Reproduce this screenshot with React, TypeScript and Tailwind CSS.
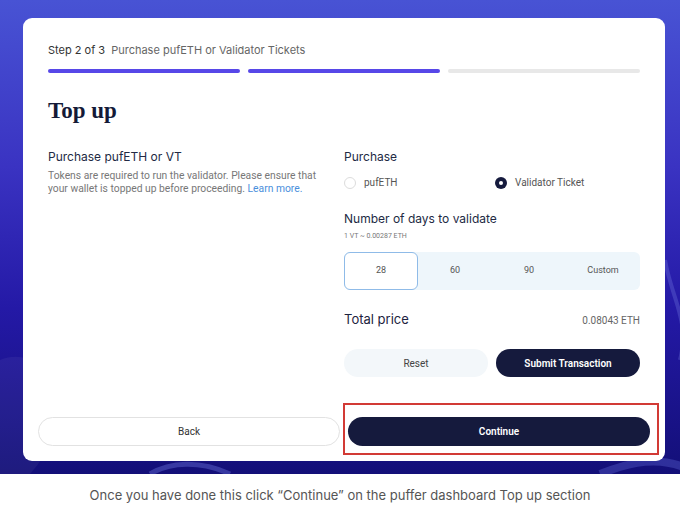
import { useState } from 'react';

const days = ['28', '60', '90', 'Custom'];

function Radio({ checked, label }: { checked: boolean; label: string }) {
  return (
    <div className="flex items-center gap-2">
      {checked ? (
        <span className="w-3 h-3 rounded-full bg-[#151a3d] flex items-center justify-center">
          <span className="w-[4px] h-[4px] rounded-full bg-white" />
        </span>
      ) : (
        <span className="w-3 h-3 rounded-full border border-[#dcdcdc] bg-white" />
      )}
      <span className="text-[10px] leading-4 text-[#555]">{label}</span>
    </div>
  );
}

function Waves() {
  return (
    <svg className="absolute inset-0 w-full h-full" viewBox="0 0 680 474" preserveAspectRatio="none">
      <path d="M0 360 C 50 340, 80 420, 30 474 L 0 474 Z" fill="#ffffff" opacity="0.05" />
      <path d="M150 474 C 170 462, 200 460, 230 474" stroke="#7a86ee" strokeWidth="5" fill="none" opacity="0.35" />
      <path d="M600 474 C 630 462, 660 455, 690 470" stroke="#6f7ae8" strokeWidth="8" fill="none" opacity="0.3" />
      <path d="M665 260 C 672 300, 690 320, 680 360" stroke="#8d96f0" strokeWidth="4" fill="none" opacity="0.25" />
    </svg>
  );
}

export default function App() {
  const [selected, setSelected] = useState('28');

  return (
    <div className="w-[680px] h-[505px] flex flex-col bg-white font-['Roboto','Liberation_Sans',sans-serif]">
      <div className="relative h-[474px] overflow-hidden bg-[linear-gradient(180deg,#4853d4_0%,#3a33c2_35%,#2419a6_65%,#130f78_100%)] pt-[18px] pl-[23px] pr-[15px]">
        <Waves />
        <div className="relative h-[443px] bg-white rounded-[9px] flex flex-col pt-[25px]">
          <div className="px-[25px]">
            <div className="flex gap-[6px] text-[11px] leading-[14px] font-['Inter',sans-serif]">
              <span className="text-[#333]">Step 2 of 3</span>
              <span className="text-[#666]">Purchase pufETH or Validator Tickets</span>
            </div>
            <div className="mt-[12px] grid grid-cols-3 gap-2">
              <div className="h-[4px] rounded-full bg-[#5747e8]" />
              <div className="h-[4px] rounded-full bg-[#5747e8]" />
              <div className="h-[4px] rounded-full bg-[#e8e8e8]" />
            </div>
            <h1 className="mt-[23px] font-['Liberation_Serif',serif] font-bold text-[23px] leading-[30px] text-[#141a38]">
              Top up
            </h1>

            <div className="mt-[23px] grid grid-cols-2">
              <div className="pr-[20px]">
                <h2 className="text-[12px] leading-4 text-[#222a44] font-['Inter',sans-serif]">Purchase pufETH or VT</h2>
                <p className="mt-[4px] text-[10.3px] leading-[13px] text-[#777]">
                  Tokens are required to run the validator. Please ensure that your wallet is topped up before
                  proceeding. <span className="text-[#4a8fdc]">Learn more.</span>
                </p>
              </div>

              <div>
                <h2 className="text-[12px] leading-4 text-[#222a44] font-['Inter',sans-serif]">Purchase</h2>
                <div className="mt-[10px] flex">
                  <div className="w-[151px]">
                    <Radio checked={false} label="pufETH" />
                  </div>
                  <Radio checked label="Validator Ticket" />
                </div>
                <h3 className="mt-[20px] text-[12px] leading-4 text-[#222a44] font-['Inter',sans-serif]">
                  Number of days to validate
                </h3>
                <p className="mt-[4px] text-[7px] leading-[10px] text-[#777]">1 VT ~ 0.00287 ETH</p>
                <div className="mt-[11px] h-[38px] grid grid-cols-4 rounded-[6px] bg-[#eef6fb]">
                  {days.map(d => (
                    <button
                      key={d}
                      onClick={() => setSelected(d)}
                      className={
                        selected === d
                          ? 'rounded-[6px] bg-white border border-[#8fbbe8] text-[9px] text-[#555]'
                          : 'text-[9px] text-[#555]'
                      }
                    >
                      {d}
                    </button>
                  ))}
                </div>
                <div className="mt-[21px] flex items-center justify-between h-[18px]">
                  <span className="text-[13px] text-[#1d2340] font-['Inter',sans-serif]">Total price</span>
                  <span className="text-[10px] text-[#666]">0.08043 ETH</span>
                </div>
                <div className="mt-[20px] grid grid-cols-2 gap-2">
                  <button className="h-[28px] rounded-full bg-[#f3f7fa] text-[10px] text-[#444]">Reset</button>
                  <button className="h-[28px] rounded-full bg-[#151a3d] text-[10px] font-semibold text-white">
                    Submit Transaction
                  </button>
                </div>
              </div>
            </div>
          </div>

          <div className="mt-auto mb-[15px] px-[15px] grid grid-cols-2 gap-2">
            <button className="h-[29px] rounded-full border border-[#e2e2e2] bg-white text-[10px] text-[#333]">
              Back
            </button>
            <div className="relative">
              <span className="absolute -left-[5px] -right-[9px] -top-[14px] -bottom-[9px] border-2 border-[#d23a35]" />
              <button className="relative w-full h-[29px] rounded-full bg-[#151a3d] text-[10px] font-semibold text-white">
                Continue
              </button>
            </div>
          </div>
        </div>
      </div>
      <p className="pt-[12px] text-center text-[13px] leading-[18px] text-[#555] font-['Inter','Liberation_Sans',sans-serif]">
        Once you have done this click “Continue” on the puffer dashboard Top up section
      </p>
    </div>
  );
}
